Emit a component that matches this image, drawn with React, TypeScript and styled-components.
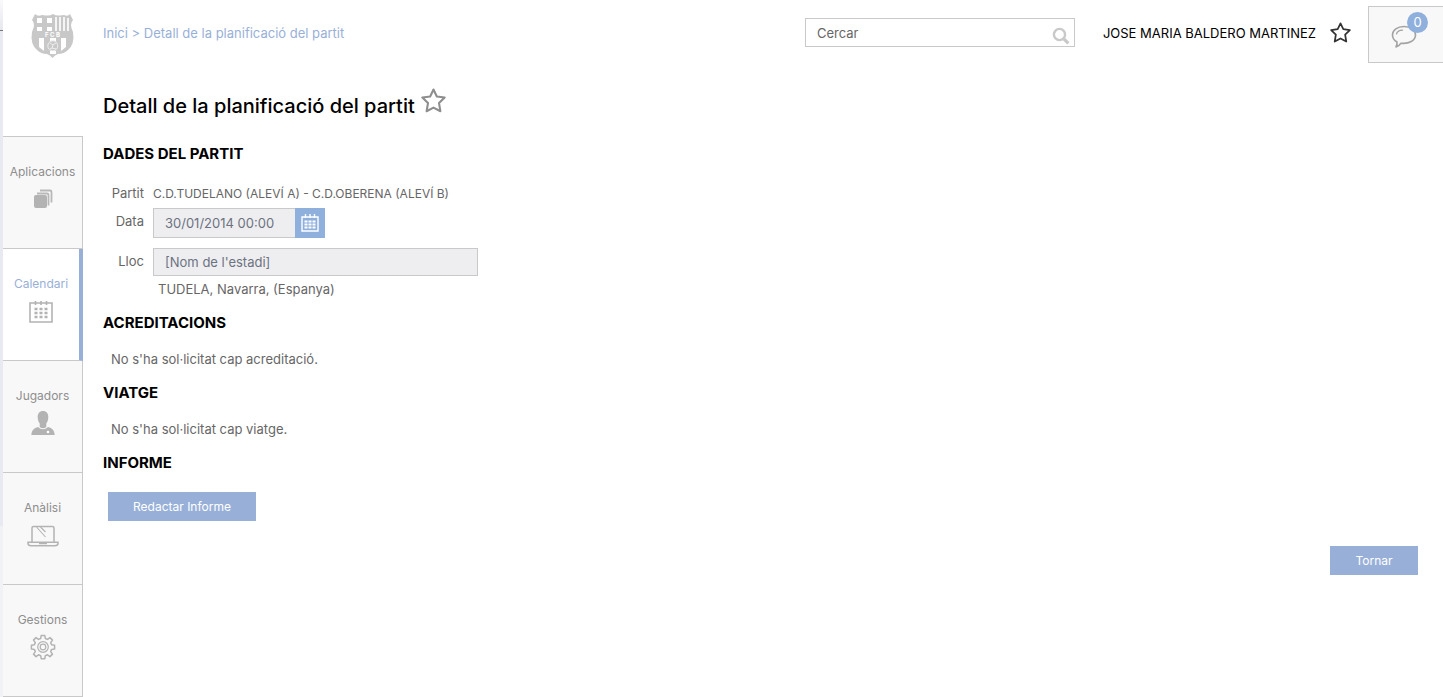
import React from 'react';
import styled, { createGlobalStyle, css } from 'styled-components';

const GlobalStyle = createGlobalStyle`
  *, *::before, *::after { box-sizing: border-box; }
  body {
    margin: 0;
    background: #fff;
    color: #666;
    font: 13px/20px Inter, "Noto Sans", sans-serif;
  }
  a { color: inherit; text-decoration: none; }
  button, input { font: inherit; border-radius: 0; }
  h1, h2, p, ul { margin: 0; padding: 0; }
  svg { display: block; flex: none; }
`;

const Page = styled.div`
  display: flex;
  align-items: stretch;
  min-height: 100vh;
`;

const Edge = styled.div`
  flex: none;
  width: 3px;
  background: linear-gradient(#fafafc 0, #e6e7ee 30px, #77787c 30px, #77787c 31px, #e8eaf2 31px, #e8eaf2 526px, #f1f2f6 526px);
`;

const Sidebar = styled.aside`
  flex: none;
  width: 80px;
`;

const Crest = styled.a`
  display: flex;
  justify-content: center;
  height: 136px;
  padding: 12px 0 0 20px;
`;

const Menu = styled.ul`
  list-style: none;
  border-top: 1px solid #c9c9c9;
`;

const MenuLink = styled.a<{ $active?: boolean }>`
  display: flex;
  flex-direction: column;
  align-items: center;
  gap: 5px;
  height: 112px;
  padding-top: 25px;
  font-size: 12px;
  color: #8e8e8e;
  background: #f8f8f8;
  border-right: 1px solid #c9c9c9;
  border-bottom: 1px solid #c9c9c9;
  ${(p) =>
    p.$active &&
    css`
      color: #98b0d8;
      background: #fff;
      border-right: 4px solid #98b0d8;
    `}
`;

const MenuIcon = styled.span`
  display: flex;
  align-items: center;
  height: 24px;
`;

const Content = styled.div`
  flex: 1;
  min-width: 0;
`;

const Header = styled.header`
  display: flex;
  align-items: center;
  height: 63px;
  padding: 6px 0 0 20px;
`;

const Breadcrumb = styled.nav`
  flex: 1;
  height: 24px;
  color: #98b0d8;
`;

const Search = styled.form`
  display: flex;
  align-items: center;
  width: 270px;
  height: 29px;
  margin: 0 28px 4px 0;
  padding: 0 4px 0 11px;
  border: 1px solid #c9c9c9;
`;

const SearchInput = styled.input`
  flex: 1;
  min-width: 0;
  padding: 0;
  border: 0;
  outline: 0;
  background: none;
  &::placeholder { color: #666; opacity: 1; }
`;

const IconButton = styled.button`
  display: flex;
  padding: 0;
  border: 0;
  background: none;
  cursor: pointer;
`;

const SearchButton = styled(IconButton)`
  padding-top: 6px;
`;

const User = styled.div`
  display: flex;
  align-items: center;
  gap: 14px;
  height: 24px;
  margin: 0 17px 4px 0;
  color: #000;
`;

const Messages = styled.button`
  position: relative;
  display: flex;
  align-items: flex-start;
  width: 75px;
  height: 57px;
  padding: 18px 0 0 22px;
  background: #f8f8f8;
  border: 1px solid #c9c9c9;
  border-right: 0;
  cursor: pointer;
`;

const Badge = styled.span`
  position: absolute;
  top: 5px;
  right: 15px;
  width: 21px;
  height: 21px;
  border-radius: 50%;
  background: #8fb0dc;
  color: #fff;
  line-height: 20px;
`;

const Main = styled.main`
  padding: 25px 25px 0 20px;
`;

const TitleRow = styled.div`
  display: flex;
  align-items: flex-start;
  gap: 6px;
  height: 42px;
`;

const Title = styled.h1`
  font-size: 20px;
  line-height: 36px;
  font-weight: 500;
  color: #000;
`;

const Section = styled.section`
  margin-top: 14px;
`;

const Heading = styled.h2`
  margin-bottom: 16px;
  font-size: 15px;
  line-height: 20px;
  font-weight: 700;
  color: #000;
`;

const Note = styled.p`
  padding-left: 8px;
`;

const Fields = styled.div`
  display: grid;
  grid-template-columns: 41px minmax(0, 325px);
  column-gap: 9px;
`;

const Label = styled.label`
  height: 26px;
  line-height: 26px;
  text-align: right;
`;

const Match = styled.span`
  height: 28px;
  font-size: 12px;
  line-height: 28px;
`;

const DateField = styled.div`
  display: flex;
  width: 172px;
  height: 30px;
  margin-bottom: 10px;
`;

const Field = styled.input`
  flex: 1;
  min-width: 0;
  width: 100%;
  height: 28px;
  padding: 0 11px;
  border: 1px solid #c9c9c9;
  outline: 0;
  background: #eeeef0;
  color: #6c7280;
  ${DateField} & {
    height: 30px;
    border-right: 0;
  }
`;

const DateButton = styled(IconButton)`
  width: 30px;
  align-items: center;
  justify-content: center;
  background: #8fb0dc;
`;

const Place = styled.p`
  grid-column: 2;
  padding: 3px 0 0 5px;
`;

const Action = styled.button<{ $width: number }>`
  display: block;
  width: ${(p) => p.$width}px;
  height: 29px;
  padding: 0;
  border: 0;
  background: #98b0d8;
  color: #fff;
  font-size: 12px;
  cursor: pointer;
`;

const ReportAction = styled.div`
  padding: 3px 0 0 5px;
`;

const Footer = styled.footer`
  display: flex;
  justify-content: flex-end;
  padding: 25px 0;
`;

const CrestIcon = () => (
  <svg width="46" height="48" viewBox="0 0 46 48" aria-hidden="true">
    <path d="M5 2Q8 5 12 3L16 3.500Q20 4 23 2Q26 4 30 3.500L34 3Q38 5 40 2L43 8Q39 12 43 20Q45 32 38 38Q34 42 28 42Q25 43 22.500 46Q20 43 17 42Q11 42 7 38Q0 32 2 20Q6 12 2 8Z" fill="#c8c8c8" />
    <path d="M7 6h5v5H7zM17 6h5v5h-5zM7 15h5v4H7zM17 15h5v4h-5z" fill="#fff" />
    <path d="M26 5v14M30 5v14M34 5v14M38 6v13" stroke="#fff" strokeWidth="1.600" />
    <path d="M9 26h5v13l-5-4zM20 26h6v3h-6zM20 39h6v3h-6zM31 26h5v9l-5 4z" fill="#fff" />
    <circle cx="22.800" cy="33.800" r="5" fill="#c8c8c8" stroke="#efefef" />
    <path d="M20 31l3 2 3-2M23 33l-1 3M20 37l2-1 4 1" stroke="#efefef" fill="none" />
    <text x="22.500" y="25" textAnchor="middle" fontSize="6" fontWeight="700" fill="#fff">F C B</text>
  </svg>
);

const AppsIcon = () => (
  <svg width="20" height="20" viewBox="0 0 20 20" aria-hidden="true">
    <rect x="1" y="6" width="13" height="13" rx="2" fill="#b3b3b3" />
    <path d="M4 4.500h10q1.500 0 1.500 1.500v10.500M7 1.500h10q1.500 0 1.500 1.500v10.500" fill="none" stroke="#b8b8b8" strokeWidth="1.800" />
  </svg>
);

const CalendarIcon = () => (
  <svg width="24" height="23" viewBox="0 0 24 23" aria-hidden="true">
    <path d="M1 3h22v19H1z" fill="none" stroke="#b3b3b3" strokeWidth="1.600" />
    <path d="M6.500 1v4M12 1v4M17.500 1v4" stroke="#b3b3b3" strokeWidth="1.600" />
    <path d="M5.500 9h13M5.500 13h13M5.500 17h13" stroke="#b3b3b3" strokeWidth="2.400" strokeDasharray="3 2" />
  </svg>
);

const PlayerIcon = () => (
  <svg width="24" height="24" viewBox="0 0 24 24" aria-hidden="true">
    <path d="M12 0C8.500 0 6.500 2.500 6.700 6.500C6.900 9 7.500 11 8.700 12.500V16Q12 18.500 15.300 16V12.500C16.500 11 17.100 9 17.300 6.500C17.500 2.500 15.500 0 12 0Z" fill="#b3b3b3" />
    <path d="M7 16Q12 20.500 17 16Q23.500 17.500 23.700 24H.3Q.5 17.500 7 16Z" fill="#b3b3b3" />
    <circle cx="17" cy="21" r="1.300" fill="#fff" />
  </svg>
);

const LaptopIcon = () => (
  <svg width="32" height="24" viewBox="0 0 32 24" fill="none" stroke="#b3b3b3" strokeWidth="1.500" aria-hidden="true">
    <path d="M5 19V5q0-1.500 1.500-1.500h19Q27 3.500 27 5v14M1 19.200h30v1q0 2.500-3 2.500H4q-3 0-3-2.500zM12 20.500h8" />
    <path d="M9.500 4l9 10M13.500 4l5 5" strokeWidth="1.100" />
  </svg>
);

const GearIcon = () => (
  <svg width="26" height="26" viewBox="0 0 26 26" fill="none" stroke="#b3b3b3" strokeWidth="1.500" strokeLinejoin="round" aria-hidden="true">
    {/* Eight rounded teeth around the hub */}
    <path d="M11.200 1.500h3.600l.5 3 2.200.9 2.500-1.800 2.500 2.500-1.800 2.500.9 2.200 3 .5v3.600l-3 .5-.9 2.200 1.800 2.500-2.500 2.500-2.500-1.800-2.200.9-.5 3h-3.600l-.5-3-2.200-.9L6 22.600l-2.500-2.500 1.800-2.500-.9-2.200-3-.5v-3.600l3-.5.9-2.200L3.500 6.100 6 3.600l2.500 1.800 2.200-.9z" />
    <circle cx="13" cy="13" r="5.300" strokeWidth="1.200" />
    <circle cx="13" cy="13" r="2.800" strokeWidth="1.200" />
  </svg>
);

const StarIcon = ({ size, color }: { size: number; color: string }) => (
  <svg width={size} height={size} viewBox="0 0 24 24" fill="none" stroke={color} strokeWidth="2" strokeLinejoin="round" aria-hidden="true">
    <path d="M12 1.500l3.200 6.700 7.500 1-5.400 5.300 1.300 7.800L12 18.800l-6.600 3.500 1.300-7.800L1.300 9.200l7.500-1z" />
  </svg>
);

const SearchIcon = () => (
  <svg width="18" height="18" viewBox="0 0 18 18" fill="none" stroke="#c9c9c9" aria-hidden="true">
    <circle cx="7.500" cy="7.500" r="5.600" strokeWidth="2.400" />
    <path d="M11.800 11.800l4.500 4.500" strokeWidth="3.200" />
  </svg>
);

const BubbleIcon = () => (
  <svg width="26" height="24" viewBox="0 0 26 24" fill="none" stroke="#a3a3a3" strokeWidth="1.600" strokeLinecap="round" strokeLinejoin="round" aria-hidden="true">
    <path d="M13 1.500C6.500 1.500 1.500 5 1.500 10c0 3 1.500 5.400 4.500 7 .3 2-.2 3.500-1 5 2.500-.8 4-2 5-3.800 8 1 14.500-2.700 14.500-8.200 0-5-5-8.500-11.500-8.500z" />
    <path d="M5.500 9C6 6.700 8.500 5.300 11.500 5.200" strokeWidth="1.200" />
  </svg>
);

const DateIcon = () => (
  <svg width="18" height="18" viewBox="0 0 18 18" fill="none" stroke="#fff" aria-hidden="true">
    <path d="M1 3h16v14H1z" strokeWidth="1.400" />
    <path d="M4.500 0v4M9 0v4M13.500 0v4" strokeWidth="1.400" />
    <path d="M3.500 7.500h11M3.500 10.500h11M3.500 13.500h11" strokeWidth="2" strokeDasharray="3 1" />
  </svg>
);

const menu = [
  { name: 'Aplicacions', Icon: AppsIcon },
  { name: 'Calendari', Icon: CalendarIcon, active: true },
  { name: 'Jugadors', Icon: PlayerIcon },
  { name: 'Anàlisi', Icon: LaptopIcon },
  { name: 'Gestions', Icon: GearIcon },
];

export default function App() {
  return (
    <>
      <GlobalStyle />
      <Page>
        <Edge />
        <Sidebar>
          <Crest href="#" aria-label="FCB"><CrestIcon /></Crest>
          <Menu>
            {menu.map(({ name, Icon, active }) => (
              <li key={name}>
                <MenuLink href="#" $active={active}>{name}<MenuIcon><Icon /></MenuIcon></MenuLink>
              </li>
            ))}
          </Menu>
        </Sidebar>
        <Content>
          <Header>
            <Breadcrumb><a href="#">Inici</a> &gt; <a href="#">Detall de la planificació del partit</a></Breadcrumb>
            <Search>
              <SearchInput type="search" placeholder="Cercar" aria-label="Cercar" />
              <SearchButton type="button" aria-label="Cercar"><SearchIcon /></SearchButton>
            </Search>
            <User>
              <span>JOSE MARIA BALDERO MARTINEZ</span>
              <IconButton aria-label="Preferits"><StarIcon size={21} color="#333" /></IconButton>
            </User>
            <Messages aria-label="Missatges"><BubbleIcon /><Badge>0</Badge></Messages>
          </Header>
          <Main>
            <TitleRow>
              <Title>Detall de la planificació del partit</Title>
              <IconButton aria-label="Afegir a preferits"><StarIcon size={25} color="#8e8e8e" /></IconButton>
            </TitleRow>
            <Section>
              <Heading>DADES DEL PARTIT</Heading>
              <Fields>
                <Label as="span">Partit</Label>
                <Match>C.D.TUDELANO (ALEVÍ A) - C.D.OBERENA (ALEVÍ B)</Match>
                <Label htmlFor="data">Data</Label>
                <DateField>
                  <Field id="data" readOnly defaultValue="30/01/2014 00:00" />
                  <DateButton type="button" aria-label="Calendari"><DateIcon /></DateButton>
                </DateField>
                <Label htmlFor="lloc">Lloc</Label>
                <Field id="lloc" readOnly defaultValue="[Nom de l'estadi]" />
                <Place>TUDELA, Navarra, (Espanya)</Place>
              </Fields>
            </Section>
            <Section>
              <Heading>ACREDITACIONS</Heading>
              <Note>No s'ha sol·licitat cap acreditació.</Note>
            </Section>
            <Section>
              <Heading>VIATGE</Heading>
              <Note>No s'ha sol·licitat cap viatge.</Note>
            </Section>
            <Section>
              <Heading>INFORME</Heading>
              <ReportAction><Action type="button" $width={148}>Redactar Informe</Action></ReportAction>
            </Section>
            <Footer><Action type="button" $width={88}>Tornar</Action></Footer>
          </Main>
        </Content>
      </Page>
    </>
  );
}
